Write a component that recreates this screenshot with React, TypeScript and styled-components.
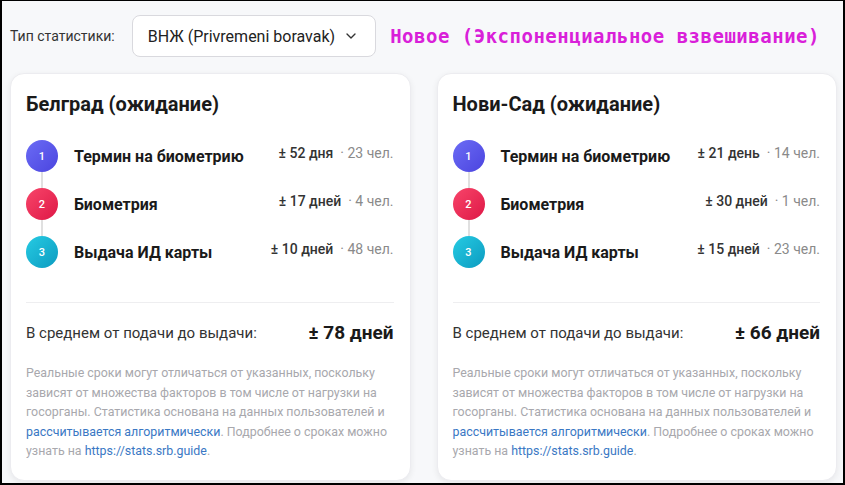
import styled, { createGlobalStyle } from 'styled-components'
import { ChevronDown } from 'lucide-react'

const GlobalStyle = createGlobalStyle`
  * { box-sizing: border-box; }
  html, body { margin: 0; padding: 0; background: #000; }
  body { font-family: Roboto, "Noto Sans", Arial, sans-serif; }
`

const Frame = styled.div`
  height: 485px;
  border: 2px solid #000;
  border-top-width: 1px;
  background: #f7f8fa;
  padding: 14px 6px 0 8px;
  display: flex;
  flex-direction: column;
  gap: 16px;
  overflow: hidden;
`

const Toolbar = styled.div`
  display: flex;
  align-items: center;
  height: 42px;
`

const Label = styled.span`
  font-size: 14px;
  color: #333;
  margin-right: 17px;
`

const Select = styled.button`
  display: flex;
  align-items: center;
  gap: 8px;
  height: 42px;
  padding: 0 16px 0 15px;
  border: 1px solid #d9d9de;
  border-radius: 8px;
  background: #fff;
  font-family: inherit;
  font-size: 16px;
  color: #222;
  cursor: pointer;
`

const ModeTag = styled.span`
  margin-left: 14px;
  font-family: "DejaVu Sans Mono", "Liberation Mono", monospace;
  font-weight: 700;
  font-size: 19px;
  letter-spacing: 0.5px;
  color: #d920d9;
`

const Columns = styled.div`
  display: grid;
  grid-template-columns: 1fr 1fr;
  gap: 26px;
`

const Card = styled.section`
  background: #fff;
  border: 1px solid #ececf0;
  border-radius: 14px;
  box-shadow: 0 2px 6px rgba(0, 0, 0, 0.07);
  padding: 16px 16px 19px 15px;
`

const CardTitle = styled.h2`
  margin: 2px 0 24px;
  font-size: 20px;
  font-weight: 700;
  color: #1a1a1a;
`

const Steps = styled.div`
  display: flex;
  flex-direction: column;
  gap: 16px;
`

const Step = styled.div`
  display: flex;
  align-items: center;
  height: 32px;
`

const Bubble = styled.div<{ $from: string; $to: string; $last?: boolean }>`
  width: 32px;
  height: 32px;
  flex: none;
  border-radius: 50%;
  background: linear-gradient(135deg, ${(p) => p.$from}, ${(p) => p.$to});
  color: #fff;
  font-size: 11px;
  font-weight: 500;
  display: flex;
  align-items: center;
  justify-content: center;
  position: relative;

  &::after {
    content: '';
    display: ${(p) => (p.$last ? 'none' : 'block')};
    position: absolute;
    left: 15px;
    top: 32px;
    width: 2px;
    height: 16px;
    background: #e0e0e0;
  }
`

const StepName = styled.span`
  margin-left: 16px;
  font-size: 16px;
  font-weight: 700;
  color: #1a1a1a;
`

const StepStats = styled.span`
  margin-left: auto;
  margin-bottom: 7px;
  display: flex;
  align-items: baseline;
  gap: 7px;
`

const Days = styled.span`
  font-size: 14px;
  font-weight: 500;
  color: #333;
`

const People = styled.span`
  font-size: 14px;
  color: #8a8a8a;
`

const Divider = styled.hr`
  border: none;
  border-top: 1px solid #eeeef0;
  margin: 34px 0 18px;
`

const Summary = styled.div`
  display: flex;
  align-items: center;
  justify-content: space-between;
  margin-bottom: 19px;
`

const SummaryLabel = styled.span`
  font-size: 15px;
  color: #333;
`

const SummaryValue = styled.span`
  font-size: 19px;
  font-weight: 700;
  color: #1a1a1a;
`

const Note = styled.p`
  margin: 0;
  font-size: 12.4px;
  line-height: 19.5px;
  color: #a8a8ad;
`

const Link = styled.a`
  color: #3a78c4;
  text-decoration: none;
`

type StepData = { name: string; days: string; people: string }

const bubbles = [
  { from: '#6b6cf5', to: '#4b44df' },
  { from: '#f8456a', to: '#de1846' },
  { from: '#26cbe3', to: '#0c9bc0' },
]

const cities: { title: string; steps: StepData[]; total: string }[] = [
  {
    title: 'Белград (ожидание)',
    steps: [
      { name: 'Термин на биометрию', days: '± 52 дня', people: '· 23 чел.' },
      { name: 'Биометрия', days: '± 17 дней', people: '· 4 чел.' },
      { name: 'Выдача ИД карты', days: '± 10 дней', people: '· 48 чел.' },
    ],
    total: '± 78 дней',
  },
  {
    title: 'Нови-Сад (ожидание)',
    steps: [
      { name: 'Термин на биометрию', days: '± 21 день', people: '· 14 чел.' },
      { name: 'Биометрия', days: '± 30 дней', people: '· 1 чел.' },
      { name: 'Выдача ИД карты', days: '± 15 дней', people: '· 23 чел.' },
    ],
    total: '± 66 дней',
  },
]

const App = () => {
  return (
    <>
      <GlobalStyle />
      <Frame>
        <Toolbar>
          <Label>Тип статистики:</Label>
          <Select>
            ВНЖ (Privremeni boravak)
            <ChevronDown size={16} strokeWidth={2} color="#333" />
          </Select>
          <ModeTag>Новое (Экспоненциальное взвешивание)</ModeTag>
        </Toolbar>

        <Columns>
          {cities.map((city) => (
            <Card key={city.title}>
              <CardTitle>{city.title}</CardTitle>
              <Steps>
                {city.steps.map((step, i) => (
                  <Step key={step.name}>
                    <Bubble
                      $from={bubbles[i].from}
                      $to={bubbles[i].to}
                      $last={i === city.steps.length - 1}
                    >
                      {i + 1}
                    </Bubble>
                    <StepName>{step.name}</StepName>
                    <StepStats>
                      <Days>{step.days}</Days>
                      <People>{step.people}</People>
                    </StepStats>
                  </Step>
                ))}
              </Steps>
              <Divider />
              <Summary>
                <SummaryLabel>В среднем от подачи до выдачи:</SummaryLabel>
                <SummaryValue>{city.total}</SummaryValue>
              </Summary>
              <Note>
                Реальные сроки могут отличаться от указанных, поскольку зависят от
                множества факторов в том числе от нагрузки на госорганы.
                Статистика основана на данных пользователей и{' '}
                <Link href="#">рассчитывается алгоритмически</Link>. Подробнее о
                сроках можно узнать на <Link href="#">https://stats.srb.guide</Link>.
              </Note>
            </Card>
          ))}
        </Columns>
      </Frame>
    </>
  )
}

export default App
